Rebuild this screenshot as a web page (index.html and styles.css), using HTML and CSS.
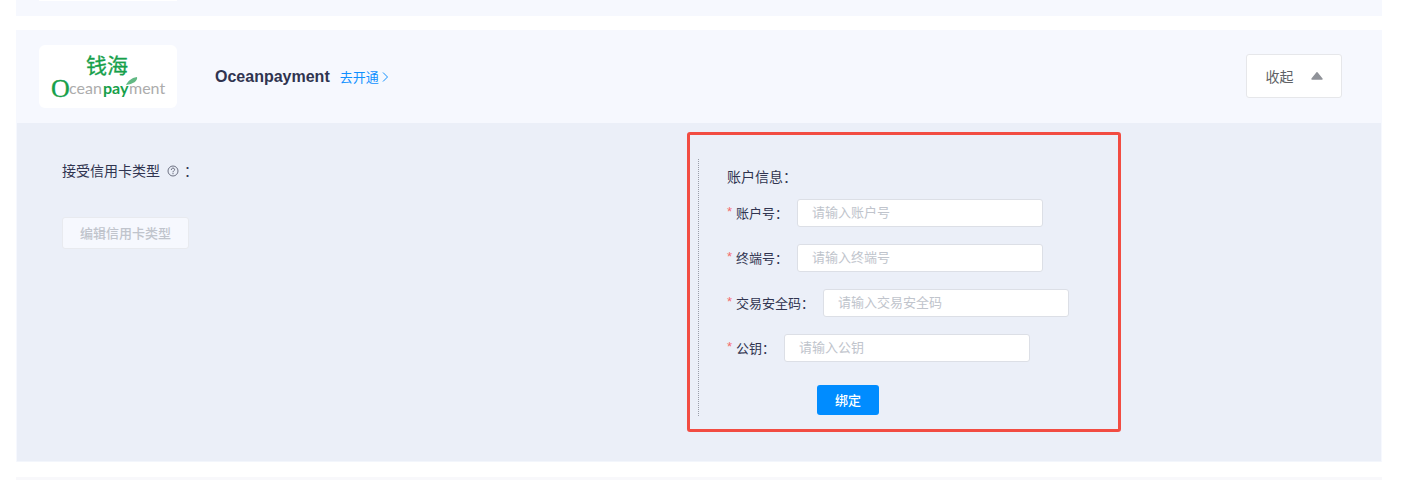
FILE: index.html
```html
<!DOCTYPE html>
<html lang="zh-CN">
<head>
<meta charset="utf-8">
<meta name="viewport" content="width=device-width, initial-scale=1">
<title>Oceanpayment</title>
<link rel="stylesheet" href="styles.css">
</head>
<body>
<main class="providers">
  <section class="provider provider-previous"><div class="logo-edge"></div></section>

  <section class="provider">
    <header class="provider-header">
      <div class="logo">
        <svg width="138" height="63" viewBox="0 0 138 63" role="img" aria-label="钱海 Oceanpayment">
          <text class="logo-cn" x="47" y="28">钱海</text>
          <text class="logo-o" x="12" y="52">O</text>
          <text class="logo-word" x="30" y="49">cean<tspan class="logo-pay" x="64">pay</tspan><tspan x="90">ment</tspan></text>
          <path d="M87 40C89 36 92 33 98 32C99 36 94 39 87 40Z" fill="#62b984"/>
        </svg>
      </div>
      <h2 class="provider-name">Oceanpayment</h2>
      <a class="open-link" href="#">去开通<svg width="10" height="12" viewBox="0 0 10 12" aria-hidden="true"><path d="M2 1.5L6.5 6L2 10.5" fill="none" stroke="currentColor"/></svg></a>
      <button class="toggle" type="button">收起<svg width="12" height="8" viewBox="0 0 12 8" aria-hidden="true"><path d="M6 .8L11 7H1Z" fill="#909399" stroke="#909399" stroke-width="1.4" stroke-linejoin="round"/></svg></button>
    </header>

    <div class="provider-body">
      <div class="cards">
        <h3 class="title">接受信用卡类型<svg width="12" height="12" viewBox="0 0 12 12" aria-hidden="true"><circle cx="6" cy="6" r="5" fill="none" stroke="currentColor" stroke-width=".9"/><path d="M4.3 4.9C4.3 2.5 7.7 2.6 7.6 4.7C7.5 5.9 6 5.8 6 7.3M6 8.1v1.1" fill="none" stroke="currentColor"/></svg>：</h3>
        <button class="edit" type="button" disabled>编辑信用卡类型</button>
      </div>

      <div class="account">
        <form class="account-form">
          <h3 class="title">账户信息：</h3>
          <div class="field"><label for="account">账户号：</label><input id="account" type="text" placeholder="请输入账户号" required></div>
          <div class="field"><label for="terminal">终端号：</label><input id="terminal" type="text" placeholder="请输入终端号" required></div>
          <div class="field"><label for="code">交易安全码：</label><input id="code" type="text" placeholder="请输入交易安全码" required></div>
          <div class="field"><label for="key">公钥：</label><input id="key" type="text" placeholder="请输入公钥" required></div>
          <button class="bind" type="submit">绑定</button>
        </form>
        <div class="highlight"></div>
      </div>
    </div>
  </section>

  <section class="provider provider-next"></section>
</main>
</body>
</html>
```
FILE: styles.css
```css
* { box-sizing: border-box; }

body {
  margin: 0;
  background: #fff;
  color: #303450;
  font-family: "Liberation Sans", "Noto Sans CJK SC", sans-serif;
  font-size: 13px;
}

h2, h3 { margin: 0; }

button, input { font: inherit; }

.providers {
  display: flex;
  flex-direction: column;
  gap: 14px;
  padding: 0 20px 0 16px;
}

.provider { background: #f6f8fe; }

.provider-previous {
  height: 16px;
  padding-left: 23px;
}

.logo-edge {
  width: 138px;
  height: 1px;
  background: #fff;
}

.provider-next {
  height: 3px;
  margin-top: 1px;
  background: #f8f8fb;
}

.provider-header {
  display: flex;
  align-items: center;
  padding: 15px 40px 15px 23px;
}

.logo {
  flex: none;
  height: 63px;
  margin-right: 38px;
  border-radius: 6px;
  background: #fff;
}

.logo svg { display: block; }

.logo-cn {
  font-family: "Noto Sans CJK SC", sans-serif;
  font-size: 21px;
  fill: #16a04a;
  stroke: #16a04a;
  stroke-width: 0.3px;
}

.logo-o {
  font-family: "Liberation Serif", serif;
  font-size: 26px;
  fill: #16a04a;
  stroke: #16a04a;
  stroke-width: 0.3px;
}

.logo-word {
  font-family: Lato, sans-serif;
  font-size: 16px;
  fill: #acacac;
}

.logo-pay {
  fill: #16a04a;
  font-weight: 700;
}

.provider-name {
  font-size: 16px;
  line-height: 24px;
}

.open-link {
  display: flex;
  align-items: center;
  gap: 2px;
  margin-left: 10px;
  color: #1090ff;
  text-decoration: none;
}

.toggle {
  display: flex;
  align-items: center;
  justify-content: center;
  gap: 17px;
  width: 96px;
  height: 44px;
  margin: 0 0 1px auto;
  padding: 0;
  border: 1px solid #e6e7ea;
  border-radius: 3px;
  background: #fff;
  color: #606266;
  font-size: 14px;
}

.provider-body {
  display: grid;
  grid-template-columns: 1fr 1fr;
  padding: 36px 0 45px;
  margin: 0 1px;
  border-bottom: 1px solid #f3f6fc;
  background: #ebeff8;
}

.cards { padding-left: 45px; }

.title {
  display: flex;
  align-items: center;
  font-size: 14px;
  font-weight: 400;
  line-height: 24px;
}

.title svg { margin: 0 5px 0 7px; color: #5f6375; }

.edit {
  height: 32px;
  margin-top: 34px;
  padding: 0 17px 1px;
  border: 1px solid #e8eaef;
  border-radius: 3px;
  background: #f6f8fe;
  color: #c0c4cc;
  font-weight: 500;
}

.account {
  position: relative;
  margin-left: -1px;
}

.account-form {
  padding: 6px 0 1px 28px;
  border-left: 1px dotted #9a9ea9;
}

.field {
  display: flex;
  align-items: center;
  margin-bottom: 17px;
}

.title + .field { margin-top: 10px; }

.field label {
  display: flex;
  margin-right: 9px;
  padding-bottom: 2px;
}

.field label::before {
  content: "*";
  width: 9px;
  padding-top: 1px;
  color: #f56c6c;
}

.field input {
  width: 246px;
  height: 28px;
  padding: 0 14px 2px;
  border: 1px solid #dcdfe6;
  border-radius: 3px;
  background: #fff;
}

.field input::placeholder { color: #c0c4cc; }

.bind {
  display: block;
  height: 30px;
  margin: 23px 0 0 90px;
  padding: 0 18px 1px;
  border: 0;
  border-radius: 3px;
  background: #008cff;
  color: #fff;
  font-weight: 500;
}

.highlight {
  position: absolute;
  inset: -27px auto -16px -11px;
  width: 434px;
  border: 3px solid #f24c42;
  border-radius: 3px;
  pointer-events: none;
}
```
